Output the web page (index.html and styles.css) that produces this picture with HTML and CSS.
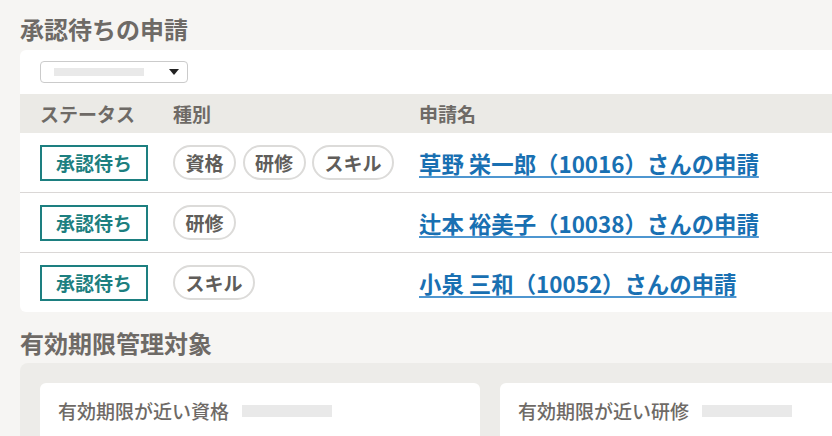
FILE: index.html
```html
<!DOCTYPE html>
<html lang="ja">
<head>
    <meta charset="UTF-8">
    <meta name="viewport" content="width=device-width, initial-scale=1.0">
    <title>ダッシュボード</title>
    <link rel="stylesheet" href="styles.css">
</head>
<body>
    <main class="dashboard">
        <section class="section">
            <h2 class="section-title">承認待ちの申請</h2>
            <div class="card">
                <div class="filter">
                    <div class="select">
                        <span class="placeholder"></span>
                        <span class="caret"></span>
                    </div>
                </div>
                <table class="requests">
                    <thead>
                        <tr>
                            <th class="col-status">ステータス</th>
                            <th class="col-type">種別</th>
                            <th>申請名</th>
                        </tr>
                    </thead>
                    <tbody>
                        <tr>
                            <td class="col-status"><span class="badge">承認待ち</span></td>
                            <td class="col-type">
                                <div class="tags">
                                    <span class="tag">資格</span>
                                    <span class="tag">研修</span>
                                    <span class="tag">スキル</span>
                                </div>
                            </td>
                            <td><a href="#" class="request-link">草野 栄一郎（10016）さんの申請</a></td>
                        </tr>
                        <tr>
                            <td class="col-status"><span class="badge">承認待ち</span></td>
                            <td class="col-type">
                                <div class="tags">
                                    <span class="tag">研修</span>
                                </div>
                            </td>
                            <td><a href="#" class="request-link">辻本 裕美子（10038）さんの申請</a></td>
                        </tr>
                        <tr>
                            <td class="col-status"><span class="badge">承認待ち</span></td>
                            <td class="col-type">
                                <div class="tags">
                                    <span class="tag">スキル</span>
                                </div>
                            </td>
                            <td><a href="#" class="request-link">小泉 三和（10052）さんの申請</a></td>
                        </tr>
                    </tbody>
                </table>
            </div>
        </section>

        <section class="section">
            <h2 class="section-title">有効期限管理対象</h2>
            <div class="panel">
                <div class="expiry-card">
                    <span class="expiry-title">有効期限が近い資格</span>
                    <span class="placeholder-bar"></span>
                </div>
                <div class="expiry-card">
                    <span class="expiry-title">有効期限が近い研修</span>
                    <span class="placeholder-bar"></span>
                </div>
            </div>
        </section>
    </main>
</body>
</html>
```

FILE: styles.css
```css
body {
    font-family: "Noto Sans CJK JP", "Noto Sans", sans-serif;
    margin: 0;
    background-color: #f6f5f3;
    overflow: hidden;
}

.dashboard {
    width: 940px;
    padding: 14px 20px 0;
}

.section-title {
    margin: 0 0 6px;
    font-size: 24px;
    line-height: 30px;
    font-weight: 700;
    color: #6e6a66;
}

.section + .section {
    margin-top: 16px;
}

.section + .section .section-title {
    margin-bottom: 5px;
}

.card {
    background-color: #fff;
    border-radius: 6px;
    overflow: hidden;
}

.filter {
    padding: 11px 20px;
}

.select {
    width: 148px;
    height: 22px;
    box-sizing: border-box;
    border: 1.5px solid #cbcbcb;
    border-radius: 4px;
    display: flex;
    align-items: center;
    justify-content: space-between;
    padding: 0 8px 0 13px;
}

.placeholder {
    width: 90px;
    height: 8px;
    background-color: #e9e9e9;
}

.caret {
    width: 0;
    height: 0;
    border-left: 5px solid transparent;
    border-right: 5px solid transparent;
    border-top: 6px solid #222;
}

.requests {
    width: 100%;
    border-collapse: collapse;
}

.requests th {
    background-color: #ebeae6;
    height: 39px;
    padding: 0;
    text-align: left;
    font-size: 19px;
    font-weight: 700;
    color: #6e6a66;
}

.requests td {
    height: 59px;
    padding: 0;
    border-top: 1px solid #dad7d6;
}

.requests tbody tr:first-child td {
    border-top: none;
}

.requests .col-status {
    width: 133px;
    padding-left: 20px;
}

.requests .col-type {
    width: 246px;
}

.badge {
    display: inline-block;
    border: 2px solid #1d7f80;
    padding: 0 14px;
    line-height: 32px;
    font-size: 19px;
    font-weight: 700;
    color: #1d7f80;
}

.tags {
    display: flex;
    gap: 6.5px;
}

.tag {
    border: 2px solid #dcdbd9;
    border-radius: 18px;
    padding: 0 10.5px;
    line-height: 31px;
    font-size: 19px;
    font-weight: 700;
    color: #605d5a;
}

.request-link {
    font-size: 22.4px;
    font-weight: 700;
    color: #1970b2;
    text-decoration: underline;
    text-decoration-color: #4e96d0;
    text-decoration-thickness: 2px;
    text-underline-offset: 3px;
}

.panel {
    background-color: #edece9;
    border-radius: 8px;
    padding: 20px;
    display: grid;
    grid-template-columns: 1fr 1fr;
    gap: 20px;
}

.expiry-card {
    background-color: #fff;
    border-radius: 6px;
    height: 80px;
    padding: 16px 19px 16px 18px;
    display: flex;
    align-items: flex-start;
    gap: 13px;
}

.expiry-title {
    font-size: 19px;
    line-height: 24px;
    font-weight: 500;
    color: #6e6a66;
}

.placeholder-bar {
    width: 90px;
    height: 12px;
    margin-top: 6px;
    background-color: #e9e9e9;
}
```
